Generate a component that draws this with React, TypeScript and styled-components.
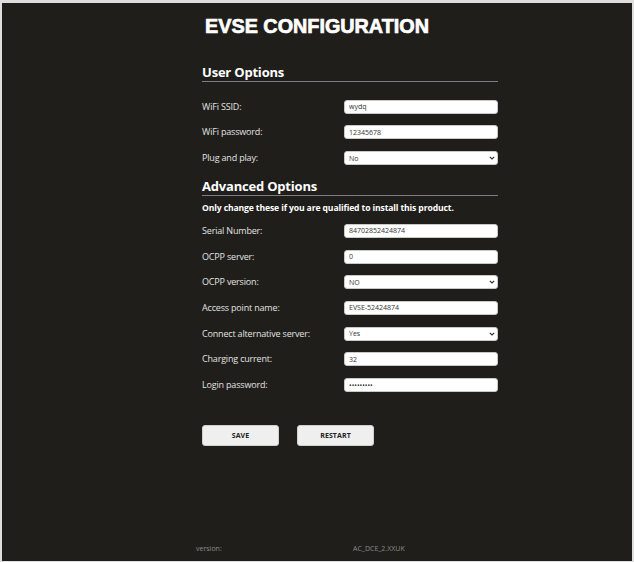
import React from "react";
import styled, { createGlobalStyle } from "styled-components";

const GlobalStyle = createGlobalStyle`
  html, body {
    margin: 0;
    padding: 0;
    background: #1f1e1b;
  }
  * {
    box-sizing: border-box;
  }
`;

const Page = styled.div`
  width: 634px;
  height: 562px;
  display: flex;
  flex-direction: column;
  background: #1f1e1b;
  border-style: solid;
  border-color: #dedede;
  border-width: 3px 2px 1px 2px;
  font-family: "Open Sans", "Noto Sans", sans-serif;
  overflow: hidden;
`;

const Title = styled.h1`
  margin: 12px 0 0;
  font-family: "Liberation Sans", Arial, sans-serif;
  font-size: 19.8px;
  line-height: 22px;
  font-weight: 700;
  text-align: center;
  color: #ffffff;
  -webkit-text-stroke: 0.7px #ffffff;
`;

const Form = styled.form`
  margin-left: 200px;
  width: 296px;
  display: flex;
  flex-direction: column;
`;

const SectionHeader = styled.h2<{ $gap: number }>`
  margin: ${(p) => p.$gap}px 0 0;
  padding-bottom: 1px;
  border-bottom: 1px solid #7e7e7e;
  font-size: 13px;
  line-height: 16px;
  font-weight: 700;
  color: #ffffff;
  letter-spacing: -0.2px;
`;

const Notice = styled.p`
  margin: 6px 0 0;
  font-size: 8.6px;
  line-height: 12px;
  font-weight: 700;
  color: #ffffff;
  letter-spacing: -0.12px;
`;

const Rows = styled.div<{ $gap: number }>`
  margin-top: ${(p) => p.$gap}px;
  display: flex;
  flex-direction: column;
  gap: 11.7px;
`;

const Row = styled.div`
  display: grid;
  grid-template-columns: 142px 154px;
  align-items: center;
  height: 14px;
`;

const LabelText = styled.label`
  font-size: 9px;
  line-height: 12px;
  color: #e2e2e2;
  letter-spacing: -0.18px;
`;

const Input = styled.input`
  display: block;
  width: 154px;
  height: 14px;
  margin: 0;
  padding: 0 4px;
  border: 1px solid #c9c9c9;
  border-radius: 3px;
  background: #ffffff;
  font-family: "Open Sans", sans-serif;
  font-size: 7px;
  color: #333333;
  outline: none;
`;

const SelectWrap = styled.div`
  position: relative;
  width: 154px;
  height: 14px;
`;

const Select = styled.select`
  display: block;
  appearance: none;
  -webkit-appearance: none;
  width: 100%;
  height: 14px;
  margin: 0;
  padding: 0 4px;
  border: 1px solid #c9c9c9;
  border-radius: 3px;
  background: #ffffff;
  font-family: "Open Sans", sans-serif;
  font-size: 7px;
  color: #333333;
  outline: none;
`;

const Chevron = styled.svg`
  position: absolute;
  right: 3px;
  top: 5px;
  width: 6px;
  height: 4px;
  pointer-events: none;
`;

const Buttons = styled.div`
  margin-top: 32.8px;
  display: flex;
  gap: 18px;
`;

const Button = styled.button`
  width: 77px;
  height: 21px;
  margin: 0;
  padding: 0;
  border: 1px solid #d0d0d0;
  border-radius: 3px;
  background: #efefef;
  font-family: "Open Sans", sans-serif;
  font-size: 7px;
  font-weight: 700;
  color: #222222;
  letter-spacing: 0.1px;
`;

const Footer = styled.footer`
  margin-top: auto;
  padding: 0 0 7px 194px;
  display: grid;
  grid-template-columns: 157px auto;
  font-size: 7px;
  line-height: 10px;
  color: #8c8c8c;
`;

type Field =
  | { id: string; label: string; kind: "text" | "password"; value: string }
  | { id: string; label: string; kind: "select"; value: string; options: string[] };

const userFields: Field[] = [
  { id: "ssid", label: "WiFi SSID:", kind: "text", value: "wydq" },
  { id: "wifipw", label: "WiFi password:", kind: "text", value: "12345678" },
  { id: "pnp", label: "Plug and play:", kind: "select", value: "No", options: ["No", "Yes"] },
];

const advancedFields: Field[] = [
  { id: "serial", label: "Serial Number:", kind: "text", value: "84702852424874" },
  { id: "ocpp", label: "OCPP server:", kind: "text", value: "0" },
  { id: "ocppver", label: "OCPP version:", kind: "select", value: "NO", options: ["NO", "1.6J"] },
  { id: "ap", label: "Access point name:", kind: "text", value: "EVSE-52424874" },
  { id: "alt", label: "Connect alternative server:", kind: "select", value: "Yes", options: ["Yes", "No"] },
  { id: "current", label: "Charging current:", kind: "text", value: "32" },
  { id: "loginpw", label: "Login password:", kind: "password", value: "123456789" },
];

function FieldRow({ field }: { field: Field }) {
  return (
    <Row>
      <LabelText htmlFor={field.id}>{field.label}</LabelText>
      {field.kind === "select" ? (
        <SelectWrap>
          <Select id={field.id} defaultValue={field.value}>
            {field.options.map((o) => (
              <option key={o}>{o}</option>
            ))}
          </Select>
          <Chevron viewBox="0 0 6 4">
            <path d="M0.8 0.8 L3 3 L5.2 0.8" fill="none" stroke="#333" strokeWidth="1.2" />
          </Chevron>
        </SelectWrap>
      ) : (
        <Input id={field.id} type={field.kind} defaultValue={field.value} />
      )}
    </Row>
  );
}

export default function App() {
  return (
    <>
      <GlobalStyle />
      <Page>
        <Title>EVSE CONFIGURATION</Title>
        <Form onSubmit={(e) => e.preventDefault()}>
          <SectionHeader $gap={26.75}>User Options</SectionHeader>
          <Rows $gap={18}>
            {userFields.map((f) => (
              <FieldRow key={f.id} field={f} />
            ))}
          </Rows>
          <SectionHeader $gap={12.5}>Advanced Options</SectionHeader>
          <Notice>Only change these if you are qualified to install this product.</Notice>
          <Rows $gap={10.3}>
            {advancedFields.map((f) => (
              <FieldRow key={f.id} field={f} />
            ))}
          </Rows>
          <Buttons>
            <Button type="submit">SAVE</Button>
            <Button type="button">RESTART</Button>
          </Buttons>
        </Form>
        <Footer>
          <span>version:</span>
          <span>AC_DCE_2.XXUK</span>
        </Footer>
      </Page>
    </>
  );
}
